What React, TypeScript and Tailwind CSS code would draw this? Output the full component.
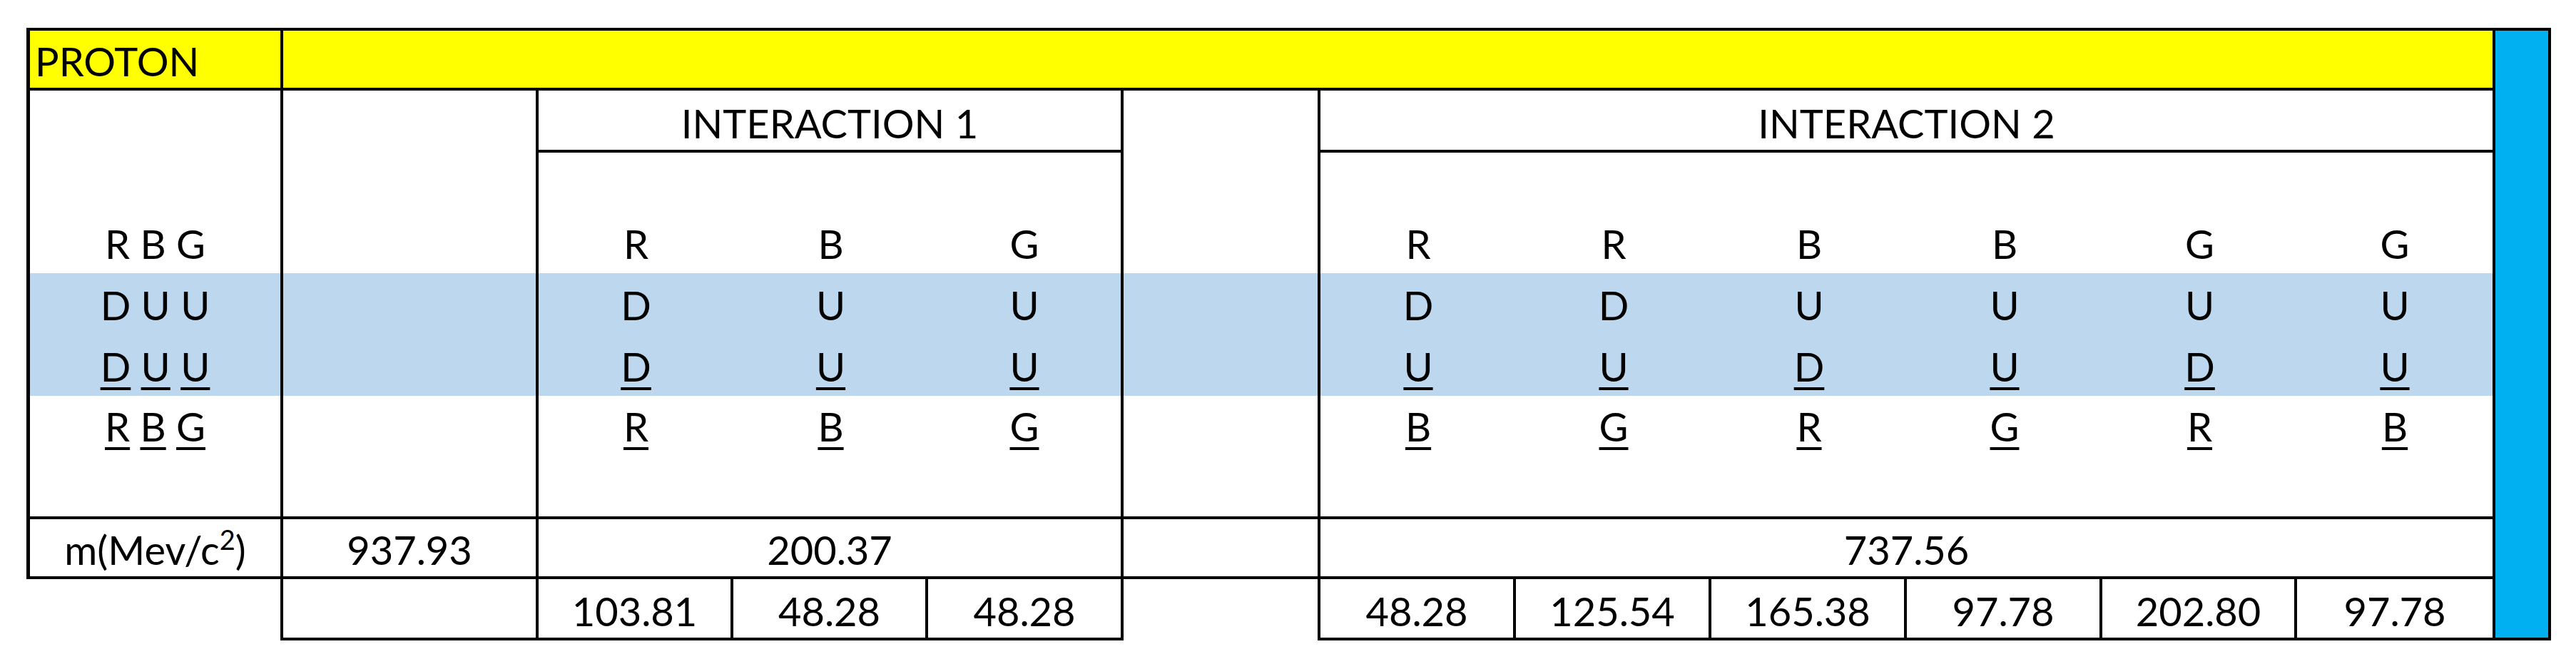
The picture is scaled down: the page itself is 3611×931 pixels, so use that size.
import type { ReactNode } from "react";

// Proton quark-colour sheet, laid out like the original spreadsheet grid.

const interaction1 = {
  colors: ["R", "B", "G"],
  flavours: ["D", "U", "U"],
  antiFlavours: ["D", "U", "U"],
  antiColors: ["R", "B", "G"],
  masses: ["103.81", "48.28", "48.28"],
};

const interaction2 = {
  colors: ["R", "R", "B", "B", "G", "G"],
  flavours: ["D", "D", "U", "U", "U", "U"],
  antiFlavours: ["U", "U", "D", "U", "D", "U"],
  antiColors: ["B", "G", "R", "G", "R", "B"],
  masses: ["48.28", "125.54", "165.38", "97.78", "202.80", "97.78"],
};

type RowKind = "colors" | "flavours" | "antiFlavours" | "antiColors" | "empty";

const rowOrder: RowKind[] = ["colors", "flavours", "antiFlavours", "antiColors", "empty"];

function Cell({ className = "", children }: { className?: string; children?: ReactNode }) {
  return (
    <div className={`flex items-end justify-center overflow-visible whitespace-nowrap border-black ${className}`}>
      {children}
    </div>
  );
}

function Under({ children }: { children: ReactNode }) {
  return <span className="underline decoration-4 underline-offset-8">{children}</span>;
}

function Triplet({ letters, underline }: { letters: string[]; underline?: boolean }) {
  return (
    <span>
      {letters.map((l, i) => (
        <span key={i}>
          {i > 0 && " "}
          {underline ? <Under>{l}</Under> : l}
        </span>
      ))}
    </span>
  );
}

function Letter({ value, underline }: { value?: string; underline?: boolean }) {
  if (!value) return null;
  return underline ? <Under>{value}</Under> : <span>{value}</span>;
}

function LetterRow({ kind }: { kind: RowKind }) {
  const blue = kind === "flavours" || kind === "antiFlavours";
  const bg = blue ? "bg-[#bdd7ee]" : "bg-white";
  const underline = kind === "antiFlavours" || kind === "antiColors";
  const label = {
    colors: ["R", "B", "G"],
    flavours: ["D", "U", "U"],
    antiFlavours: ["D", "U", "U"],
    antiColors: ["R", "B", "G"],
    empty: [] as string[],
  }[kind];
  const i1 = kind === "empty" ? [] : interaction1[kind];
  const i2 = kind === "empty" ? [] : interaction2[kind];

  return (
    <>
      <Cell className={`${bg} border-l-[5px] border-r-4 pb-[13px]`}>
        {label.length > 0 && <Triplet letters={label} underline={underline} />}
      </Cell>
      <Cell className={`${bg} border-r-4 pb-[13px]`} />
      <Cell className={`${bg} pb-[13px]`}>
        <Letter value={i1[0]} underline={underline} />
      </Cell>
      <Cell className={`${bg} pb-[13px]`}>
        <Letter value={i1[1]} underline={underline} />
      </Cell>
      <Cell className={`${bg} border-r-4 pb-[13px]`}>
        <Letter value={i1[2]} underline={underline} />
      </Cell>
      <Cell className={`${bg} border-r-4 pb-[13px]`} />
      {[0, 1, 2, 3, 4, 5].map((i) => (
        <Cell key={i} className={`${bg} pb-[13px]`}>
          <Letter value={i2[i]} underline={underline} />
        </Cell>
      ))}
    </>
  );
}

export default function App() {
  return (
    <div className="min-h-screen bg-white font-['Lato',sans-serif] text-[56px] leading-none text-black">
      <div className="ml-[37px] mt-[39px] grid w-max grid-cols-[360px_358px_273px_273px_274px_276px_274px_274px_274px_274px_273px_274px_82px] grid-rows-[88px_87px_169px_86px_86px_84px_85px_88px_86px]">
        {/* title row */}
        <Cell className="justify-start border-t-4 border-l-[5px] border-r-4 border-b-4 bg-[#ffff00] pb-[9px] pl-[7px]">
          PROTON
        </Cell>
        <Cell className="col-span-11 border-t-4 border-b-4 bg-[#ffff00]" />
        <div className="row-span-9 border-t-4 border-r-4 border-b-4 border-l-4 border-black bg-[#00b0f0]" />

        {/* interaction headers */}
        <Cell className="border-l-[5px] border-r-4 pb-[13px]" />
        <Cell className="border-r-4 pb-[13px]" />
        <Cell className="col-span-3 border-r-4 border-b-4 pb-[9px]">INTERACTION 1</Cell>
        <Cell className="border-r-4 pb-[13px]" />
        <Cell className="col-span-6 border-b-4 pb-[9px]">INTERACTION 2</Cell>

        {rowOrder.map((kind) => (
          <LetterRow key={kind} kind={kind} />
        ))}

        {/* mass totals */}
        <Cell className="border-t-4 border-b-4 border-l-[5px] border-r-4 pb-[9px]">
          <span>
            m(Mev/c<sup className="top-[-21px] text-[38px]">2</sup>)
          </span>
        </Cell>
        <Cell className="border-t-4 border-b-4 border-r-4 pb-[9px]">937.93</Cell>
        <Cell className="col-span-3 border-t-4 border-b-4 border-r-4 pb-[9px]">200.37</Cell>
        <Cell className="border-t-4 border-b-4 border-r-4 pb-[9px]" />
        <Cell className="col-span-6 border-t-4 border-b-4 pb-[9px]">737.56</Cell>

        {/* per-quark masses */}
        <Cell className="border-r-4" />
        <Cell className="border-r-4 border-b-4 pb-[9px]" />
        {interaction1.masses.map((m, i) => (
          <Cell key={`a${i}`} className="border-r-4 border-b-4 pb-[9px]">
            {m}
          </Cell>
        ))}
        <Cell className="border-r-4" />
        {interaction2.masses.map((m, i) => (
          <Cell key={`b${i}`} className={`border-b-4 pb-[9px] ${i < 5 ? "border-r-4" : ""}`}>
            {m}
          </Cell>
        ))}
      </div>
    </div>
  );
}
